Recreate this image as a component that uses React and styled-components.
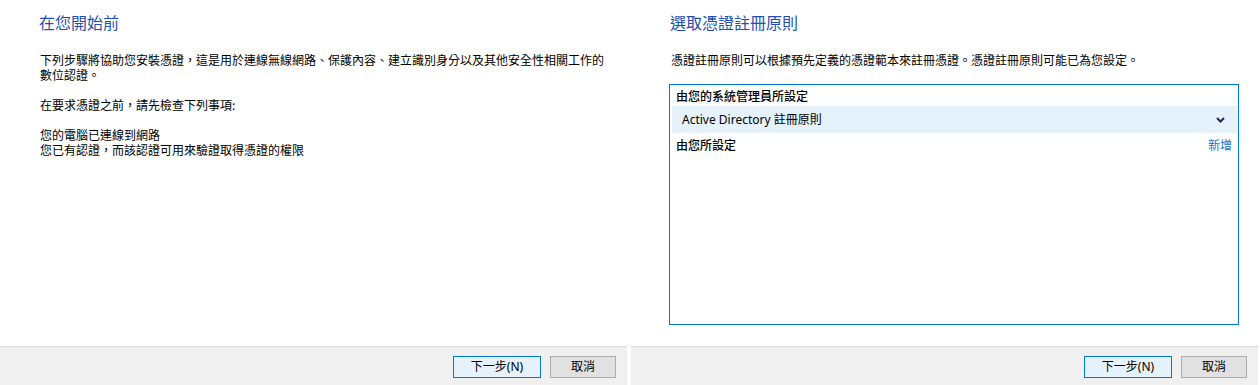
import React from "react";
import styled, { createGlobalStyle } from "styled-components";

const Global = createGlobalStyle`
  body {
    margin: 0;
    background: #fff;
    font-family: "Noto Sans", "Noto Sans CJK TC", sans-serif;
    color: #000;
  }
`;

const Page = styled.div`
  display: flex;
  gap: 4px;
  width: 1258px;
  height: 385px;
`;

const Panel = styled.div`
  width: 627px;
  height: 385px;
  display: flex;
  flex-direction: column;
`;

const Content = styled.div`
  flex: 1;
  padding: 12px 17px 0 39px;
`;

const Title = styled.h1`
  margin: 0;
  font-family: "Noto Sans CJK TC", sans-serif;
  font-weight: 400;
  font-size: 16px;
  line-height: 20px;
  color: #1f50b0;
`;

const Body = styled.div`
  margin-top: 20px;
  padding-left: 1px;
  font-family: "Noto Sans CJK TC", sans-serif;
  font-size: 12px;
  line-height: 15px;
  max-width: 568px;
`;

const Para = styled.p`
  margin: 0 0 15px;
`;

const PolicyBox = styled.div`
  margin: 17px 0 0 -1px;
  width: 568px;
  height: 239px;
  border: 1px solid #0078d7;
  font-size: 12px;
  line-height: 15px;
`;

const GroupRow = styled.div`
  display: flex;
  align-items: center;
  justify-content: space-between;
  height: ${p => p.h}px;
  padding: 0 6px;
  font-family: "Noto Sans CJK TC", sans-serif;
`;

const GroupLabel = styled.span`
  font-weight: 500;
`;

const AddLink = styled.span`
  color: #1a6fd0;
  cursor: pointer;
`;

const Select = styled.div`
  display: flex;
  align-items: center;
  justify-content: space-between;
  height: 27px;
  margin: 0 1px 0 2px;
  padding: 0 12px 0 10px;
  background: #e5f1fb;
`;

const Chevron = () => (
  <svg width="9" height="6" viewBox="0 0 9 6">
    <polyline points="1,1 4.5,4.5 8,1" fill="none" stroke="#1b2a5a" strokeWidth="2" />
  </svg>
);

const Footer = styled.div`
  box-sizing: border-box;
  height: 39px;
  border-top: 1px solid #dcdcdc;
  background: #f0f0f0;
  display: flex;
  justify-content: flex-end;
  align-items: flex-start;
  gap: 9px;
  padding: 9px 11px 0 0;
`;

const Button = styled.button`
  box-sizing: border-box;
  width: ${p => (p.primary ? 88 : 66)}px;
  height: 22px;
  padding: 0;
  border: 1px solid ${p => (p.primary ? "#0078d7" : "#adadad")};
  background: ${p => (p.primary ? "#e5f1fb" : "#e1e1e1")};
  font-family: "Noto Sans", "Noto Sans CJK TC", sans-serif;
  font-size: 12px;
  line-height: 18px;
  color: #000;
`;

function Buttons() {
  return (
    <Footer>
      <Button primary>下一步(N)</Button>
      <Button>取消</Button>
    </Footer>
  );
}

export default function App() {
  return (
    <Page>
      <Global />
      <Panel>
        <Content>
          <Title>在您開始前</Title>
          <Body>
            <Para>
              下列步驟將協助您安裝憑證，這是用於連線無線網路、保護內容、建立識別身分以及其他安全性相關工作的數位認證。
            </Para>
            <Para>在要求憑證之前，請先檢查下列事項:</Para>
            <Para>
              您的電腦已連線到網路
              <br />
              您已有認證，而該認證可用來驗證取得憑證的權限
            </Para>
          </Body>
        </Content>
        <Buttons />
      </Panel>
      <Panel>
        <Content>
          <Title>選取憑證註冊原則</Title>
          <Body>
            憑證註冊原則可以根據預先定義的憑證範本來註冊憑證。憑證註冊原則可能已為您設定。
          </Body>
          <PolicyBox>
            <GroupRow h={21}>
              <GroupLabel>由您的系統管理員所設定</GroupLabel>
            </GroupRow>
            <Select>
              <span>Active Directory 註冊原則</span>
              <Chevron />
            </Select>
            <GroupRow h={23}>
              <GroupLabel>由您所設定</GroupLabel>
              <AddLink>新增</AddLink>
            </GroupRow>
          </PolicyBox>
        </Content>
        <Buttons />
      </Panel>
    </Page>
  );
}
